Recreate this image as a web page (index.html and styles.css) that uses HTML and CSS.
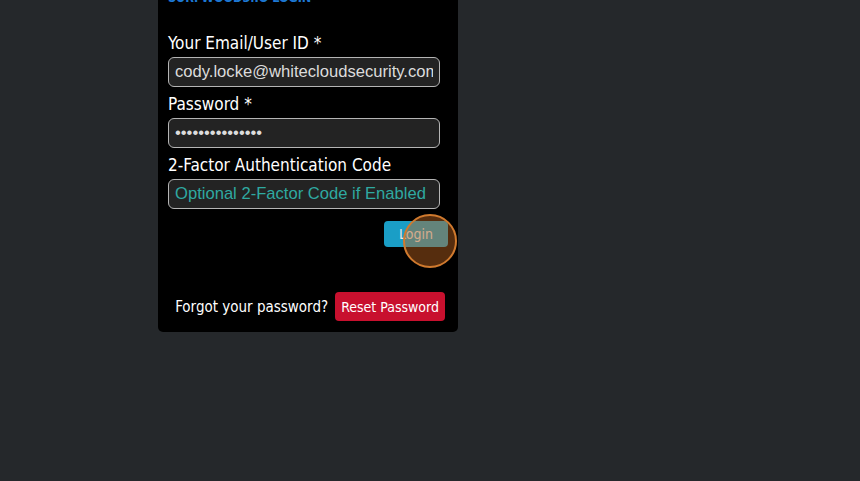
FILE: index.html
```html
<!DOCTYPE html>
<html>
<head>
<meta charset="utf-8">
<link rel="stylesheet" href="styles.css">
</head>
<body>
<div class="panel">
  <h2 class="title">SURFWOOD3.IO LOGIN</h2>
  <form class="form">
    <label class="label">Your Email/User ID *</label>
    <input class="field" type="text" value="cody.locke@whitecloudsecurity.com">
    <label class="label">Password *</label>
    <input class="field" type="password" value="abcdefghijklmno">
    <label class="label">2-Factor Authentication Code</label>
    <input class="field" type="text" placeholder="Optional 2-Factor Code if Enabled">
    <div class="actions">
      <button type="button" class="btn-login">Login</button>
      <span class="click-marker"></span>
    </div>
  </form>
  <div class="forgot">
    <span class="forgot-text">Forgot your password?</span>
    <button type="button" class="btn-reset">Reset Password</button>
  </div>
</div>
</body>
</html>
```

FILE: styles.css
```css
html, body {
  margin: 0;
  padding: 0;
  background: #25282b;
  height: 100%;
}
body {
  font-family: "DejaVu Sans Condensed", "DejaVu Sans", sans-serif;
  color: #fff;
}
.panel {
  margin-left: 158px;
  margin-top: -11px;
  width: 300px;
  box-sizing: border-box;
  background: #000;
  border-radius: 0 0 5px 5px;
  padding: 0 10px 11px 10px;
}
.title {
  margin: 0;
  font-size: 12.5px;
  line-height: 18px;
  font-weight: bold;
  color: #1d78d4;
}
.form {
  display: flex;
  flex-direction: column;
  margin-top: 26px;
  padding-right: 8px;
}
.label {
  font-size: 17px;
  line-height: 20px;
  margin-bottom: 4px;
}
.field {
  height: 30px;
  box-sizing: border-box;
  border: 1px solid #b5b5b5;
  border-radius: 6px;
  background: #232323;
  color: #dcdcdc;
  font-family: "Liberation Sans", Arial, sans-serif;
  font-size: 16.6px;
  padding: 0 6px;
  margin-bottom: 7px;
  outline: none;
}
.field::placeholder {
  color: #2fa9a1;
  opacity: 1;
}
.actions {
  position: relative;
  display: flex;
  justify-content: flex-end;
  margin-top: 5px;
  margin-right: -8px;
}
.btn-login {
  width: 64px;
  height: 26px;
  border: none;
  border-radius: 4px;
  background: #1a9ec6;
  color: #e6e6e6;
  font-family: "DejaVu Sans Condensed", "DejaVu Sans", sans-serif;
  font-size: 14px;
  padding: 0;
}
.click-marker {
  position: absolute;
  left: 235px;
  top: -7px;
  width: 50px;
  height: 50px;
  border-radius: 50%;
  border: 2px solid #d07a2e;
  background: rgba(190, 100, 30, 0.45);
}
.forgot {
  display: flex;
  justify-content: flex-end;
  align-items: center;
  gap: 7px;
  margin-top: 45px;
  padding-right: 3px;
}
.forgot-text {
  font-size: 15px;
}
.btn-reset {
  height: 29px;
  border: none;
  border-radius: 4px;
  background: #c8102e;
  color: #fff;
  font-family: "DejaVu Sans Condensed", "DejaVu Sans", sans-serif;
  font-size: 14px;
  padding: 0 6px;
}
```
